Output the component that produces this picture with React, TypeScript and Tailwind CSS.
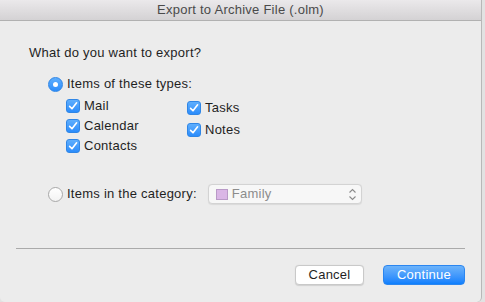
import React from "react";

const font = { fontFamily: '"Liberation Sans", Arial, sans-serif' };

function Check({ label }: { label: string }) {
  return (
    <div className="flex items-center gap-[4px]">
      <div className="w-[14px] h-[14px] rounded-[3px] bg-gradient-to-b from-[#5eaefd] to-[#2a8cfb] border border-[#2f86e6] flex items-center justify-center">
        <svg width="10" height="10" viewBox="0 0 10 10">
          <path d="M1.6 5.4 L4 7.8 L8.6 1.8" fill="none" stroke="white" strokeWidth="1.6" strokeLinecap="round" strokeLinejoin="round" />
        </svg>
      </div>
      <span className="text-[13px] tracking-[0.25px] text-[#1f1f1f] leading-[16px]">{label}</span>
    </div>
  );
}

export default function App() {
  return (
    <div className="w-[485px] h-[302px] bg-[#e2e2e2] flex overflow-hidden" style={font}>
      <div className="w-[482px] h-[302px] bg-[#ececec] border-r border-[#b8b8b8] rounded-b-[5px] flex flex-col shrink-0">
        <div className="h-[21px] shrink-0 bg-gradient-to-b from-[#ebe9eb] to-[#d4d2d4] border-b border-[#b1b1b1] flex items-center justify-center">
          <span className="text-[13px] tracking-[0.25px] text-[#4a4a4a] leading-[16px]">Export to Archive File (.olm)</span>
        </div>

        <div className="pl-[29px] mt-[24px] text-[13px] tracking-[0.25px] text-[#1f1f1f] leading-[16px]">What do you want to export?</div>

        <div className="pl-[48px] mt-[15px] flex items-center gap-[4px] h-[16px]">
          <div className="w-[15px] h-[15px] rounded-full bg-gradient-to-b from-[#5eaefd] to-[#2a8cfb] border border-[#2f86e6] flex items-center justify-center">
            <div className="w-[5px] h-[5px] rounded-full bg-white" />
          </div>
          <span className="text-[13px] tracking-[0.25px] text-[#1f1f1f] leading-[16px]">Items of these types:</span>
        </div>

        <div className="pl-[66px] mt-[4px] flex">
          <div className="w-[121px] flex flex-col">
            <div className="h-[20px] flex items-center"><Check label="Mail" /></div>
            <div className="h-[20px] flex items-center"><Check label="Calendar" /></div>
            <div className="h-[20px] flex items-center"><Check label="Contacts" /></div>
          </div>
          <div className="flex flex-col mt-[1px]">
            <div className="h-[22px] flex items-center"><Check label="Tasks" /></div>
            <div className="h-[22px] flex items-center"><Check label="Notes" /></div>
          </div>
        </div>

        <div className="pl-[48px] mt-[28px] flex items-center h-[20px]">
          <div className="w-[15px] h-[15px] rounded-full bg-gradient-to-b from-[#ffffff] to-[#f3f3f3] border border-[#a8a8a8]" />
          <span className="ml-[4px] text-[13px] tracking-[0.25px] text-[#1f1f1f] leading-[16px]">Items in the category:</span>
          <div className="ml-[11px] w-[154px] h-[20px] rounded-[4px] bg-[#f7f7f7] border border-[#d3d3d3] shadow-[0_0.5px_1px_rgba(0,0,0,0.08)] flex items-center pl-[7px] pr-[4px]">
            <div className="w-[12px] h-[11px] bg-[#dab6e6] border border-[#b99ac7]" />
            <span className="ml-[4px] text-[13px] tracking-[0.25px] text-[#8c8c8c] leading-[16px] flex-1">Family</span>
            <svg width="9" height="13" viewBox="0 0 9 13">
              <path d="M1.5 4.5 L4.5 1.5 L7.5 4.5 M1.5 8.5 L4.5 11.5 L7.5 8.5" fill="none" stroke="#8a8a8a" strokeWidth="1.1" />
            </svg>
          </div>
        </div>

        <div className="ml-[16px] mr-[16px] mt-[44px] h-px bg-[#aaaaaa]" />

        <div className="mt-[16px] flex justify-end pr-[16px] gap-[19px]">
          <button className="w-[69px] h-[20px] rounded-[4px] bg-white border border-[#c9c9c9] shadow-[0_0.5px_1px_rgba(0,0,0,0.12)] text-[13px] tracking-[0.25px] text-[#1f1f1f] leading-[16px] flex items-center justify-center">Cancel</button>
          <button className="w-[82px] h-[20px] rounded-[4px] bg-gradient-to-b from-[#6cb3fa] to-[#0a7ffd] border border-[#2b86f0] text-[13px] tracking-[0.25px] text-white leading-[16px] flex items-center justify-center">Continue</button>
        </div>
      </div>
    </div>
  );
}
